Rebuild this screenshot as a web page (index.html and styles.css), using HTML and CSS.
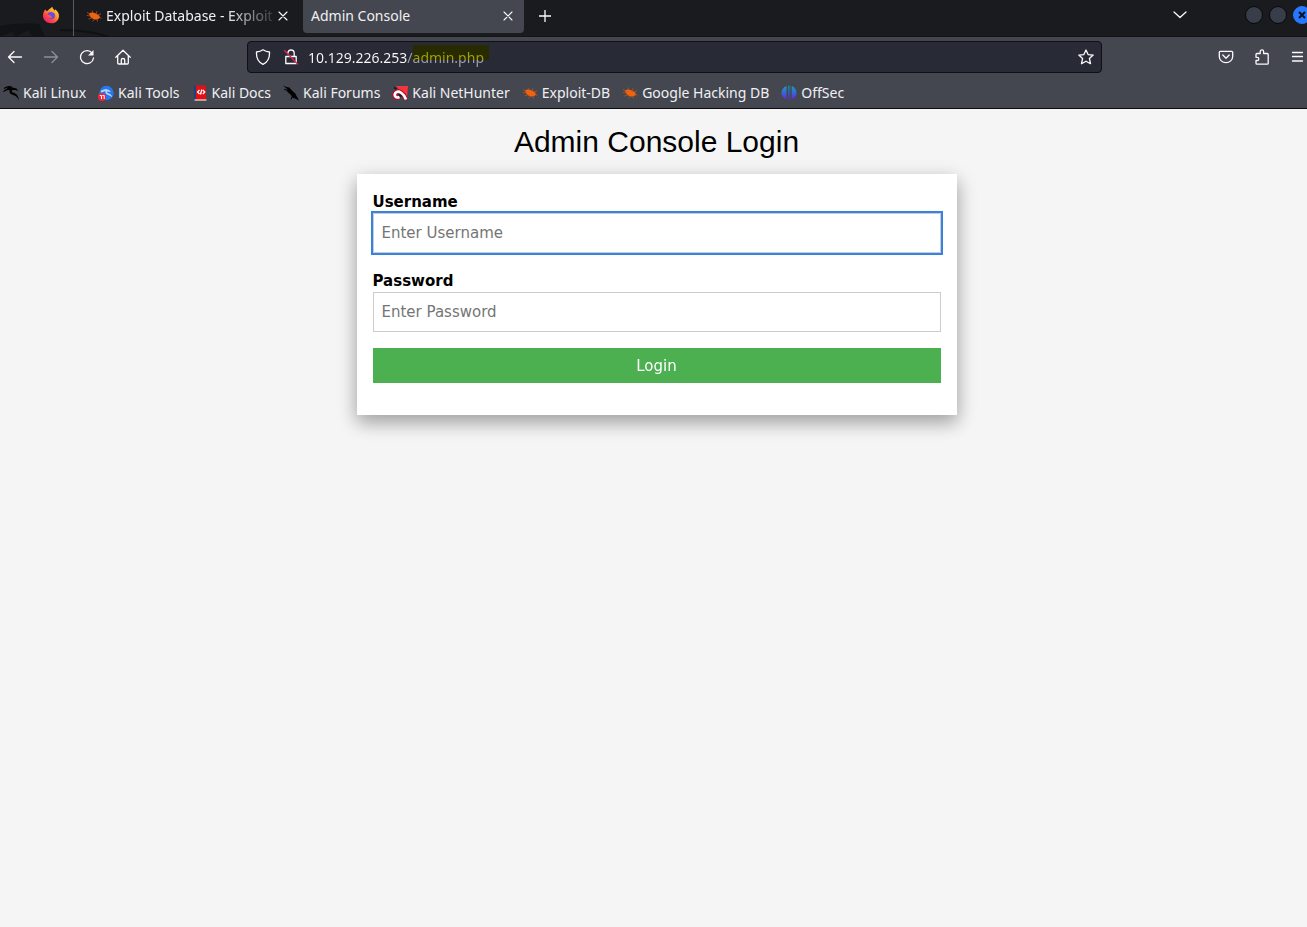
FILE: index.html
```html
<!DOCTYPE html>
<html lang="en">
<head>
<meta charset="utf-8">
<meta name="viewport" content="width=device-width, initial-scale=1">
<title>Admin Console</title>
<link rel="stylesheet" href="styles.css">
</head>
<body>
<svg class="defs" aria-hidden="true">
  <defs>
    <linearGradient id="fox" x1="1" y1="0" x2="0.2" y2="1"><stop offset="0" stop-color="#fff44f"/><stop offset=".4" stop-color="#ffa02a"/><stop offset=".7" stop-color="#ff4a3f"/><stop offset="1" stop-color="#e8187c"/></linearGradient>
    <linearGradient id="offsec" x1="0" y1="0" x2="0" y2="1"><stop offset="0" stop-color="#12a5b8"/><stop offset=".55" stop-color="#3d5be0"/><stop offset="1" stop-color="#6a1fc4"/></linearGradient>
    <symbol id="bug" viewBox="0 0 16 16">
      <path d="M3 5.600C5 3.800 9 4.400 11.500 6.600c1.600.6 2.500 1.900 2.400 3.200-1.300 1.500-3.200 1.900-5 1.600C6 11 3.200 8.600 3 5.600z" fill="#f0620f"/>
      <path d="M4 6 1 4.500M5 8 .8 7.500M6 9.800 2.500 11M8.500 11l-2 2.500M11 11l.5 2.500M7 5 6 2.500M10 6l1-2.800M12 7l3-1.200M13.500 9.500l2 .8" stroke="#b9541c" stroke-width=".8" fill="none"/>
    </symbol>
    <symbol id="dragon" viewBox="0 0 16 16">
      <path d="M1 3.500Q5 .8 9 2.200M.5 6.500Q5 3 9.500 3.500" fill="none" stroke="#000" stroke-width="1.200"/>
      <path d="M5 1.500 9.500 2.500l4 1 1.800 2.700-2.300-1.300-3.500.2C8 6 8.500 7.300 10.500 7.800c3 .8 5.200 3 5.300 7.700-1.300-3.300-3-4.700-5.600-5.500C7.300 9.200 6 7.500 6.500 5L3.500 5.200z"/>
    </symbol>
  </defs>
</svg>

<header class="browser">
  <div class="tabstrip">
    <svg class="art" width="140" height="37" viewBox="0 0 140 37" aria-hidden="true"><path d="M0 26Q22 22 39 24L45 37H33L28 30 16 37 12 32 0 37z" fill="#121317"/><path d="M60 30Q90 30 109 37" fill="none" stroke="#101115" stroke-width="2"/></svg>
    <button class="pinned" type="button" aria-label="Firefox">
      <svg width="18" height="18" viewBox="0 0 18 18"><path d="M3.200 3.600 4.500 5l1.200-.3C7 3 8.800 2.500 10.200.8c.7 2.300 1.600 2.700 2.600 3.900l.5-1.500c3 2.500 4 5 3.600 7.700C16.300 15 13 17.200 9.200 17.200 4.500 17.200 1 13.900 1 9.700 1 7.500 2 5 3.200 3.600z" fill="url(#fox)"/><path d="M5.300 8.400c1-2.400 3.600-3 6-1.900 2 1.200 2.400 3.700 1.200 5.300-1.600 2-5 1.900-6.300-.2 1.500.9 3.300.3 4-.6-1.700-.2-1.600-1.700-3-1.900-.9-.1-1.500 0-1.900-.7z" fill="#7049df"/></svg>
    </button>
    <div class="tab">
      <svg width="16" height="16"><use href="#bug"/></svg>
      <a class="tab-title faded" href="#">Exploit Database - Exploit</a>
      <button class="close" type="button" aria-label="Close tab"><svg class="line thin" width="10" height="10" viewBox="0 0 10 10"><path d="M1 1l8 8M9 1 1 9"/></svg></button>
    </div>
    <div class="tab active">
      <a class="tab-title" href="#">Admin Console</a>
      <button class="close" type="button" aria-label="Close tab"><svg class="line thin" width="10" height="10" viewBox="0 0 10 10"><path d="M1 1l8 8M9 1 1 9"/></svg></button>
    </div>
    <button class="newtab" type="button" aria-label="New tab"><svg class="line" width="12" height="12" viewBox="0 0 12 12"><path d="M6 0v12M0 6h12"/></svg></button>
    <button class="all-tabs" type="button" aria-label="List all tabs"><svg class="line" width="14" height="8" viewBox="0 0 14 8"><path d="M1 1l6 5.500L13 1"/></svg></button>
    <div class="window-buttons">
      <button class="dot" type="button" aria-label="Minimize"></button>
      <button class="dot" type="button" aria-label="Maximize"></button>
      <button class="dot quit" type="button" aria-label="Close window"><svg width="8" height="8" viewBox="0 0 8 8"><path d="M1 1l6 6M7 1 1 7" stroke="#0b1322" stroke-width="2"/></svg></button>
    </div>
  </div>

  <nav class="toolbar" aria-label="Navigation">
    <button type="button" aria-label="Back"><svg class="line" width="16" height="16" viewBox="0 0 16 16"><path d="M14.500 8H1.500M7 2.500 1.500 8 7 13.500"/></svg></button>
    <button class="dim" type="button" aria-label="Forward"><svg class="line" width="16" height="16" viewBox="0 0 16 16"><path d="M1.500 8h13M9 2.500 14.500 8 9 13.500"/></svg></button>
    <button type="button" aria-label="Reload"><svg class="line" width="16" height="16" viewBox="0 0 16 16"><path d="M13.200 4.200A6.500 6.500 0 1 0 14.500 9"/><path class="solid" d="M14.500 1v5.500H9z"/></svg></button>
    <button type="button" aria-label="Home"><svg class="line" width="16" height="16" viewBox="0 0 16 16"><path d="M.8 8.200 8 1.300l7.200 6.900M2.700 6.800v7.200q0 1 1 1h8.600q1 0 1-1V6.800M6.300 15v-4.300Q6.300 9.500 8 9.500t1.700 1.200V15"/></svg></button>
    <div class="urlbar">
      <svg class="line" width="16" height="16" viewBox="0 0 16 16"><path d="M8 .8C10 2.200 12.500 2.800 14.500 3c.3 5.500-1.500 10-6.500 12.300C3 13 1.200 8.500 1.500 3c2-.2 4.500-.8 6.500-2.200z"/></svg>
      <svg class="line" width="16" height="16" viewBox="0 0 16 16"><path d="M2.800 7.500h10.400v7H2.800zM4.800 4.500C5 2.300 6.200 1 8 1s3.200 1.300 3.200 3.500v3"/><path class="slash" d="M1.500 1.500l13 13.500"/></svg>
      <div class="url-field">
        <input class="url-input" type="text" value="10.129.226.253/admin.php" aria-label="Address">
        <span class="marker"></span>
      </div>
      <button type="button" aria-label="Bookmark this page"><svg class="line" width="16" height="16" viewBox="0 0 16 16"><path d="M8 1l2.100 4.600 5.100.5-3.800 3.400 1.100 5.200L8 12.200l-4.500 2.500 1.100-5.200L.8 6.100l5.100-.5z"/></svg></button>
    </div>
    <button type="button" aria-label="Pocket"><svg class="line" width="16" height="16" viewBox="0 0 16 16"><path d="M2.300 2.300h11.400q1 0 1 1v4.200a6.700 6.200 0 0 1-13.400 0V3.300q0-1 1-1zM4.800 6 8 9.200 11.200 6"/></svg></button>
    <button type="button" aria-label="Extensions"><svg class="line" width="16" height="16" viewBox="0 0 16 16"><path d="M2 5.500q0-1 1-1h3.200V2.600a1.700 1.700 0 0 1 3.400 0v1.900h3.600q1 0 1 1v8.700q0 1-1 1H3q-1 0-1-1v-2.700h1.200a1.500 1.500 0 0 0 0-3.200H2z"/></svg></button>
    <button type="button" aria-label="Menu"><svg class="line" width="16" height="16" viewBox="0 0 16 16"><path d="M2.500 3.500h10M2.500 7.500h10M2.500 12h10"/></svg></button>
  </nav>

  <nav class="bookmarks" aria-label="Bookmarks">
    <a href="#"><svg width="16" height="16"><use href="#dragon"/></svg>Kali Linux</a>
    <a href="#"><svg width="16" height="16" viewBox="0 0 16 16"><circle cx="8.500" cy="8" r="7.200" fill="#2777f0"/><path d="M3 5.500 8 4l3 1 2 2-4-.5c-.5 1 1 1.800 2.500 2.300 1.500.6 2.500 2 2.700 3.700-1.200-1.400-2.200-2-4-2.500C8 9.300 7 8 7.500 6L3 7.500" fill="#b9d6ff"/><circle cx="4" cy="12" r="4" fill="#e8283c"/><path d="M1.800 10.500h1.700v3.500M4.500 10.500h1.700v3.500" stroke="#fff" fill="none"/></svg>Kali Tools</a>
    <a href="#"><svg width="16" height="16" viewBox="0 0 16 16"><path d="M2 .5h12V15H2z" fill="#e01016"/><path d="M2 .5h2V15H2z" fill="#17447e"/><path d="M2.500 15h12" stroke="#e8d7ca" stroke-width="1.300"/><path d="M7.500 5 5.500 7l2 2M10.800 5l2 2-2 2M9.800 4.500 8.500 9.500" fill="none" stroke="#fff" stroke-width="1.300"/></svg>Kali Docs</a>
    <a href="#"><svg width="16" height="16" viewBox="0 0 16 16"><path d="M0 .5 3.500 2l2.800.5L9.500 6l2.800 2.500 1.200 2.500 2.500 4.500-4.500-2.300-2.500-.7-1-2.500L4 6.500 4.500 4.500z"/><path d="M1 4.500l4 .8M9 12l-1 2.500" stroke="#000"/></svg>Kali Forums</a>
    <a href="#"><svg width="16" height="16" viewBox="0 0 16 16"><path d="M4 1h12l-1 12.500z" fill="#f5343f"/><path d="M14 14.500C12.500 8.500 6.500 4.500 3.200 7.500 1 10.500 3.500 13.800 7.500 12.300" fill="none" stroke="#b3122e" stroke-width="4.600"/><path d="M14 14.500C12 8.500 6.500 4.800 3.500 7.800 1.500 10.700 4 13.500 7.500 12" fill="none" stroke="#fff" stroke-width="2.600"/><path d="M6.500 9.300 9.500 11.500M2 2.500 4.500 4" stroke="#16171b" stroke-width="1.600"/></svg>Kali NetHunter</a>
    <a href="#"><svg width="16" height="16"><use href="#bug"/></svg>Exploit-DB</a>
    <a href="#"><svg width="16" height="16"><use href="#bug"/></svg>Google Hacking DB</a>
    <a href="#"><svg width="16" height="16" viewBox="0 0 16 16"><path d="M5.500 1v13.500C2 13.300.5 10.800.5 8S2 2.200 5.500 1zM7 .8h.7v14.800L7 14.800zM8.600.8h.7v14l-.7.8zM10.800 1c3.300 1.200 4.700 4.200 4.700 7s-1.400 5.300-4.700 6.500z" fill="url(#offsec)"/></svg>OffSec</a>
  </nav>
</header>

<main class="page">
  <h2>Admin Console Login</h2>
  <form class="card">
    <label for="user">Username</label>
    <input id="user" type="text" placeholder="Enter Username" autofocus>
    <label for="pass">Password</label>
    <input id="pass" type="password" placeholder="Enter Password">
    <button type="submit">Login</button>
  </form>
</main>
</body>
</html>
```
FILE: styles.css
```css
* {
  box-sizing: border-box;
}

body {
  margin: 0;
  min-height: 100vh;
  background: #f5f5f5;
  overflow-x: hidden;
}

svg {
  display: block;
  flex: none;
}

.defs {
  position: absolute;
  width: 0;
  height: 0;
}

/* Browser frame */
.browser {
  background: #44474f;
  color: #f0f0f4;
  font: 14px/20px "Noto Sans", sans-serif;
  border-bottom: 1px solid #0c0c0d;
}

.browser a {
  color: inherit;
  text-decoration: none;
}

.browser button {
  display: flex;
  align-items: center;
  justify-content: center;
  padding: 0;
  border: 0;
  background: none;
  color: inherit;
  flex: none;
}

.line path {
  fill: none;
  stroke: #fbfbfe;
  stroke-width: 1.3;
  stroke-linecap: round;
  stroke-linejoin: round;
}

.thin path {
  stroke-width: 1.1;
}

.line .solid {
  fill: #fbfbfe;
  stroke: none;
}

.line .slash {
  stroke: #e22850;
}

.tabstrip {
  position: relative;
  display: flex;
  height: 37px;
  background: #1a1b1f;
  border-bottom: 1px solid #131417;
}

.art {
  position: absolute;
  left: 0;
  top: 0;
}

.browser .pinned {
  position: relative;
  width: 74px;
  padding: 0 14px 6px 42px;
  border-right: 1px solid #5b5c61;
}

.tab {
  position: relative;
  display: flex;
  align-items: center;
  gap: 4px;
  width: 229px;
  height: 33px;
  padding: 0 15px 2px 12px;
}

.tab.active {
  width: 221px;
  padding: 0 11px 2px 8px;
  border-radius: 0 0 4px 4px;
  background: #44474f;
}

.tab-title {
  flex: 1;
  white-space: nowrap;
}

.faded {
  mask-image: linear-gradient(90deg, #000 72%, transparent 104%);
}

.browser .newtab {
  width: 42px;
  height: 31px;
}

.browser .all-tabs {
  width: 14px;
  height: 30px;
  margin-left: auto;
}

.window-buttons {
  display: flex;
  align-items: center;
  gap: 6px;
  height: 30px;
  margin: 0 -4px 0 58px;
}

.browser .dot {
  width: 18px;
  height: 18px;
  border: 1px solid #07080a;
  border-radius: 50%;
  background: #373d49;
}

.browser .quit {
  border-color: #2777ff;
  background: #2777ff;
}

.toolbar {
  display: flex;
  align-items: center;
  gap: 20px;
  padding: 4px 1px 4px 7px;
}

.browser .dim {
  opacity: 0.4;
}

.urlbar {
  display: flex;
  align-items: center;
  flex: 1;
  gap: 12px;
  height: 32px;
  margin: 0 96px;
  padding: 0 7px;
  border: 1px solid #0f1014;
  border-radius: 4px;
  background: #282a36;
}

.url-field {
  position: relative;
  flex: 1;
  margin-left: -4px;
}

.url-input {
  display: block;
  width: 100%;
  height: 30px;
  margin: 0;
  padding: 0 0 0 1px;
  border: 0;
  outline: 0;
  font: 14px/20px "Noto Sans", sans-serif;
  color: transparent;
  background: linear-gradient(90deg, #fbfbfe 100px, #a2a3a9 100px);
  background-clip: text;
}

.marker {
  position: absolute;
  left: 106px;
  top: 3px;
  width: 76px;
  height: 15px;
  background: #ffff00;
  mix-blend-mode: multiply;
  pointer-events: none;
}

.bookmarks {
  display: flex;
  align-items: center;
  gap: 12px;
  height: 31px;
  padding: 0 3px;
}

.bookmarks a {
  display: flex;
  align-items: center;
  gap: 4px;
  white-space: nowrap;
}

/* Login page */
.page {
  padding: 10px 10px 10px 16px;
  color: #000;
  font: 15px/23px "DejaVu Sans", sans-serif;
}

.page h2 {
  margin: 0 0 10px;
  font: 30px/45px "Liberation Sans", Arial, sans-serif;
  text-align: center;
}

.card {
  max-width: 600px;
  margin: 0 auto;
  padding: 16px 16px 32px;
  background: #fff;
  box-shadow: 0 8px 16px rgba(0, 0, 0, 0.2), 0 6px 20px rgba(0, 0, 0, 0.19);
}

.card label {
  display: block;
  padding-top: 2px;
  line-height: 21px;
  font-weight: bold;
}

.card input {
  display: block;
  width: 100%;
  height: 40px;
  margin: 0 0 16px;
  padding: 8px;
  border: 1px solid #ccc;
  border-radius: 0;
  background: #fff;
  font: inherit;
}

.card input:focus {
  outline: 2px solid #3584e4;
}

.card input::placeholder {
  color: #757575;
}

.card button {
  display: block;
  width: 100%;
  height: 35px;
  padding: 2px 0 0;
  border: 0;
  background: #4caf50;
  color: #fff;
  font: inherit;
}
```
